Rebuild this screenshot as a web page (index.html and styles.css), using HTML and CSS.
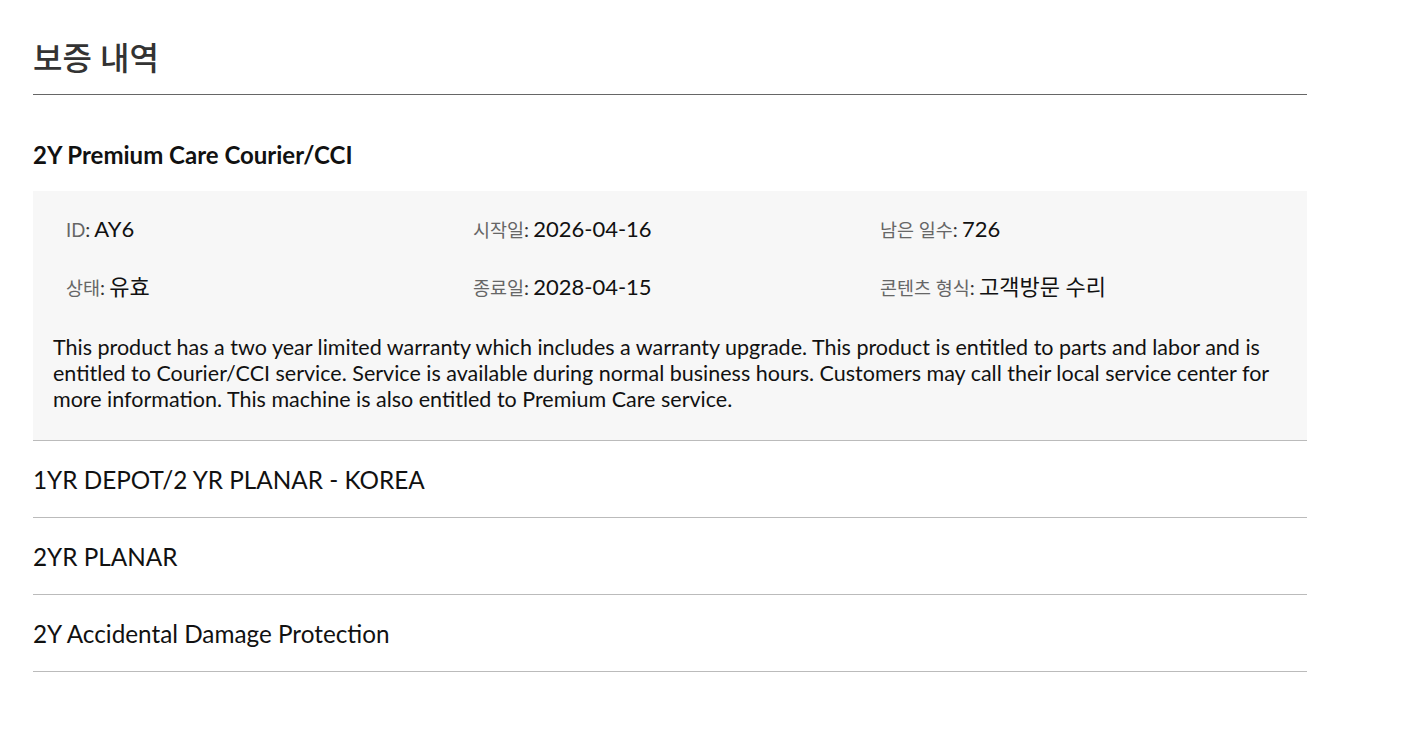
FILE: index.html
```html
<!DOCTYPE html>
<html lang="ko">
<head>
<meta charset="utf-8">
<title>보증 내역</title>
<link rel="stylesheet" href="styles.css">
</head>
<body>
<main class="page">
  <h1 class="title">보증 내역</h1>
  <section class="warranty">
    <h2 class="warranty-name">2Y Premium Care Courier/CCI</h2>
    <div class="details">
      <div class="fields">
        <div class="field"><span class="label">ID</span><span class="colon">:</span> <span class="value">AY6</span></div>
        <div class="field"><span class="label">시작일</span><span class="colon">:</span> <span class="value">2026-04-16</span></div>
        <div class="field"><span class="label">남은 일수</span><span class="colon">:</span> <span class="value">726</span></div>
        <div class="field"><span class="label">상태</span><span class="colon">:</span> <span class="value">유효</span></div>
        <div class="field"><span class="label">종료일</span><span class="colon">:</span> <span class="value">2028-04-15</span></div>
        <div class="field"><span class="label">콘텐츠 형식</span><span class="colon">:</span> <span class="value">고객방문 수리</span></div>
      </div>
      <p class="description">This product has a two year limited warranty which includes a warranty upgrade. This product is entitled to parts and labor and is entitled to Courier/CCI service. Service is available during normal business hours. Customers may call their local service center for more information. This machine is also entitled to Premium Care service.</p>
    </div>
  </section>
  <ul class="others">
    <li class="other">1YR DEPOT/2 YR PLANAR - KOREA</li>
    <li class="other">2YR PLANAR</li>
    <li class="other">2Y Accidental Damage Protection</li>
  </ul>
</main>
</body>
</html>
```

FILE: styles.css
```css
html, body {
  margin: 0;
  padding: 0;
  background: #ffffff;
}

body {
  font-family: Lato, "Noto Sans CJK KR", sans-serif;
  color: #111;
}

.page {
  width: 1274px;
  padding-left: 33px;
}

.title {
  margin: 0;
  padding-top: 38px;
  padding-bottom: 16px;
  font-size: 32px;
  line-height: 40px;
  font-weight: 500;
  color: #333;
  border-bottom: 1px solid #666;
}

.warranty-name {
  margin: 45px 0 21px;
  font-size: 24px;
  line-height: 30px;
  font-weight: 700;
  color: #111;
}

.details {
  background: #f7f7f7;
  padding: 23px 20px 28px;
  border-bottom: 1px solid #bbb;
}

.fields {
  display: grid;
  grid-template-columns: 407px 407px 407px;
  row-gap: 28px;
}

.field {
  height: 30px;
  padding-left: 13px;
  line-height: 30px;
  overflow: hidden;
}

.label {
  font-size: 18.5px;
  color: #666;
}

.colon {
  font-size: 20px;
  color: #333;
}

.value {
  font-size: 22px;
  color: #111;
}

.description {
  margin: 32px 0 0;
  font-size: 21.5px;
  line-height: 26px;
  color: #111;
}

.others {
  list-style: none;
  margin: 0;
  padding: 0;
}

.other {
  height: 74px;
  padding-top: 2px;
  line-height: 74px;
  font-size: 24.3px;
  color: #111;
  border-bottom: 1px solid #bbb;
}
```
